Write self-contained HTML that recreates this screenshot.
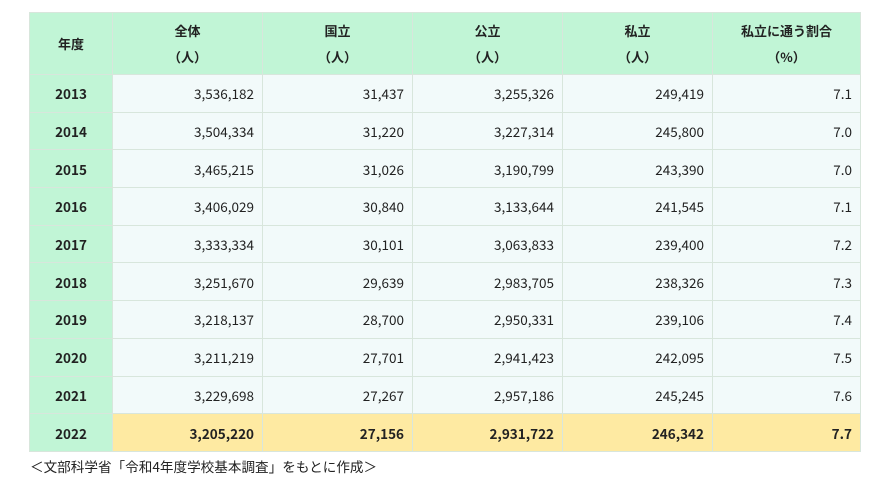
<!DOCTYPE html><html><head><meta charset="utf-8"><style>
body{margin:0;background:#fff;font-family:"Noto Sans CJK JP",sans-serif;color:#222;}
table{position:absolute;left:29px;top:12px;border-collapse:collapse;table-layout:fixed;font-size:13.5px;}
td,th{border:1px solid #d8e6dc;height:36.7px;padding:0 8px;line-height:16px;}
th{background:#c1f5d6;font-weight:bold;font-size:13px;height:61px;line-height:26px;}
td.y{background:#c1f5d6;text-align:center;font-weight:bold;}
td{background:#f2fafa;text-align:right;}
tr.last td{background:#feeaa2;font-weight:bold;}
tr.last td.y{background:#c1f5d6;}
.cap{position:absolute;left:30px;top:456px;font-size:13.6px;}
</style></head><body>
<table>
<colgroup><col style="width:83px"><col style="width:150px"><col style="width:150px"><col style="width:150px"><col style="width:150px"><col style="width:148px"></colgroup>
<tr><th>年度</th><th>全体<br>（人）</th><th>国立<br>（人）</th><th>公立<br>（人）</th><th>私立<br>（人）</th><th>私立に通う割合<br>（%）</th></tr>
<tr><td class="y">2013</td><td>3,536,182</td><td>31,437</td><td>3,255,326</td><td>249,419</td><td>7.1</td></tr>
<tr><td class="y">2014</td><td>3,504,334</td><td>31,220</td><td>3,227,314</td><td>245,800</td><td>7.0</td></tr>
<tr><td class="y">2015</td><td>3,465,215</td><td>31,026</td><td>3,190,799</td><td>243,390</td><td>7.0</td></tr>
<tr><td class="y">2016</td><td>3,406,029</td><td>30,840</td><td>3,133,644</td><td>241,545</td><td>7.1</td></tr>
<tr><td class="y">2017</td><td>3,333,334</td><td>30,101</td><td>3,063,833</td><td>239,400</td><td>7.2</td></tr>
<tr><td class="y">2018</td><td>3,251,670</td><td>29,639</td><td>2,983,705</td><td>238,326</td><td>7.3</td></tr>
<tr><td class="y">2019</td><td>3,218,137</td><td>28,700</td><td>2,950,331</td><td>239,106</td><td>7.4</td></tr>
<tr><td class="y">2020</td><td>3,211,219</td><td>27,701</td><td>2,941,423</td><td>242,095</td><td>7.5</td></tr>
<tr><td class="y">2021</td><td>3,229,698</td><td>27,267</td><td>2,957,186</td><td>245,245</td><td>7.6</td></tr>
<tr class="last"><td class="y">2022</td><td>3,205,220</td><td>27,156</td><td>2,931,722</td><td>246,342</td><td>7.7</td></tr>
</table>
<div class="cap">＜文部科学省「令和4年度学校基本調査」をもとに作成＞</div>
</body></html>
